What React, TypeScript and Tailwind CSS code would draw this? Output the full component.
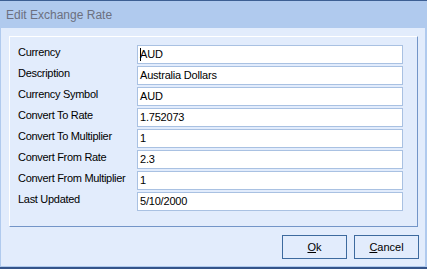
import React from 'react';

type Field = { label: string; value: string; caret?: boolean };

const fields: Field[] = [
  { label: 'Currency', value: 'AUD', caret: true },
  { label: 'Description', value: 'Australia Dollars' },
  { label: 'Currency Symbol', value: 'AUD' },
  { label: 'Convert To Rate', value: '1.752073' },
  { label: 'Convert To Multiplier', value: '1' },
  { label: 'Convert From Rate', value: '2.3' },
  { label: 'Convert From Multiplier', value: '1' },
  { label: 'Last Updated', value: '5/10/2000' },
];

const App: React.FC = () => {
  return (
    <div
      className="w-[427px] h-[269px] flex flex-col bg-[#b0caee] border-t border-b-2 border-t-[#3d5f93] border-b-[#34548a] text-[11px] text-black"
      style={{ fontFamily: '"Liberation Sans", Arial, sans-serif' }}
    >
      <div className="h-[27px] shrink-0 pl-[6px] pt-[7px] text-[12px] leading-[14px] text-[#6c7080]">Edit Exchange Rate</div>
      <div className="flex-1 mx-px mr-[2px] mb-px bg-[#e2ecfc] pl-[8px] pr-[7px] pt-[8px] flex flex-col">
        <div className="border-l border-t border-white border-r border-b border-r-[#7395c8] border-b-[#7395c8] pl-[8px] pr-[14px] pt-[8px] pb-[15px] flex flex-col gap-[2px]">
          {fields.map((f) => (
            <div key={f.label} className="flex h-[19px]">
              <div className="w-[119px] shrink-0 pt-[1px] leading-[13px] tracking-[-0.3px]">{f.label}</div>
              <div className="flex-1 bg-white border border-[#a9c1e2] pl-[2px] pt-[2px] leading-[13px] tracking-[-0.2px] flex items-start">
                {f.caret ? <span className="w-px h-[13px] bg-black -mr-px" /> : null}
                <span>{f.value}</span>
              </div>
            </div>
          ))}
        </div>
        <div className="flex justify-end gap-[7px] mt-[8px]">
          <button className="w-[65px] h-[24px] border border-[#3d6a9e] bg-[#e2ecfc] text-[11px] leading-none">
            <u>O</u>k
          </button>
          <button className="w-[65px] h-[24px] border border-[#3d6a9e] bg-[#e2ecfc] text-[11px] leading-none -mr-px">
            <u>C</u>ancel
          </button>
        </div>
      </div>
    </div>
  );
};

export default App;
